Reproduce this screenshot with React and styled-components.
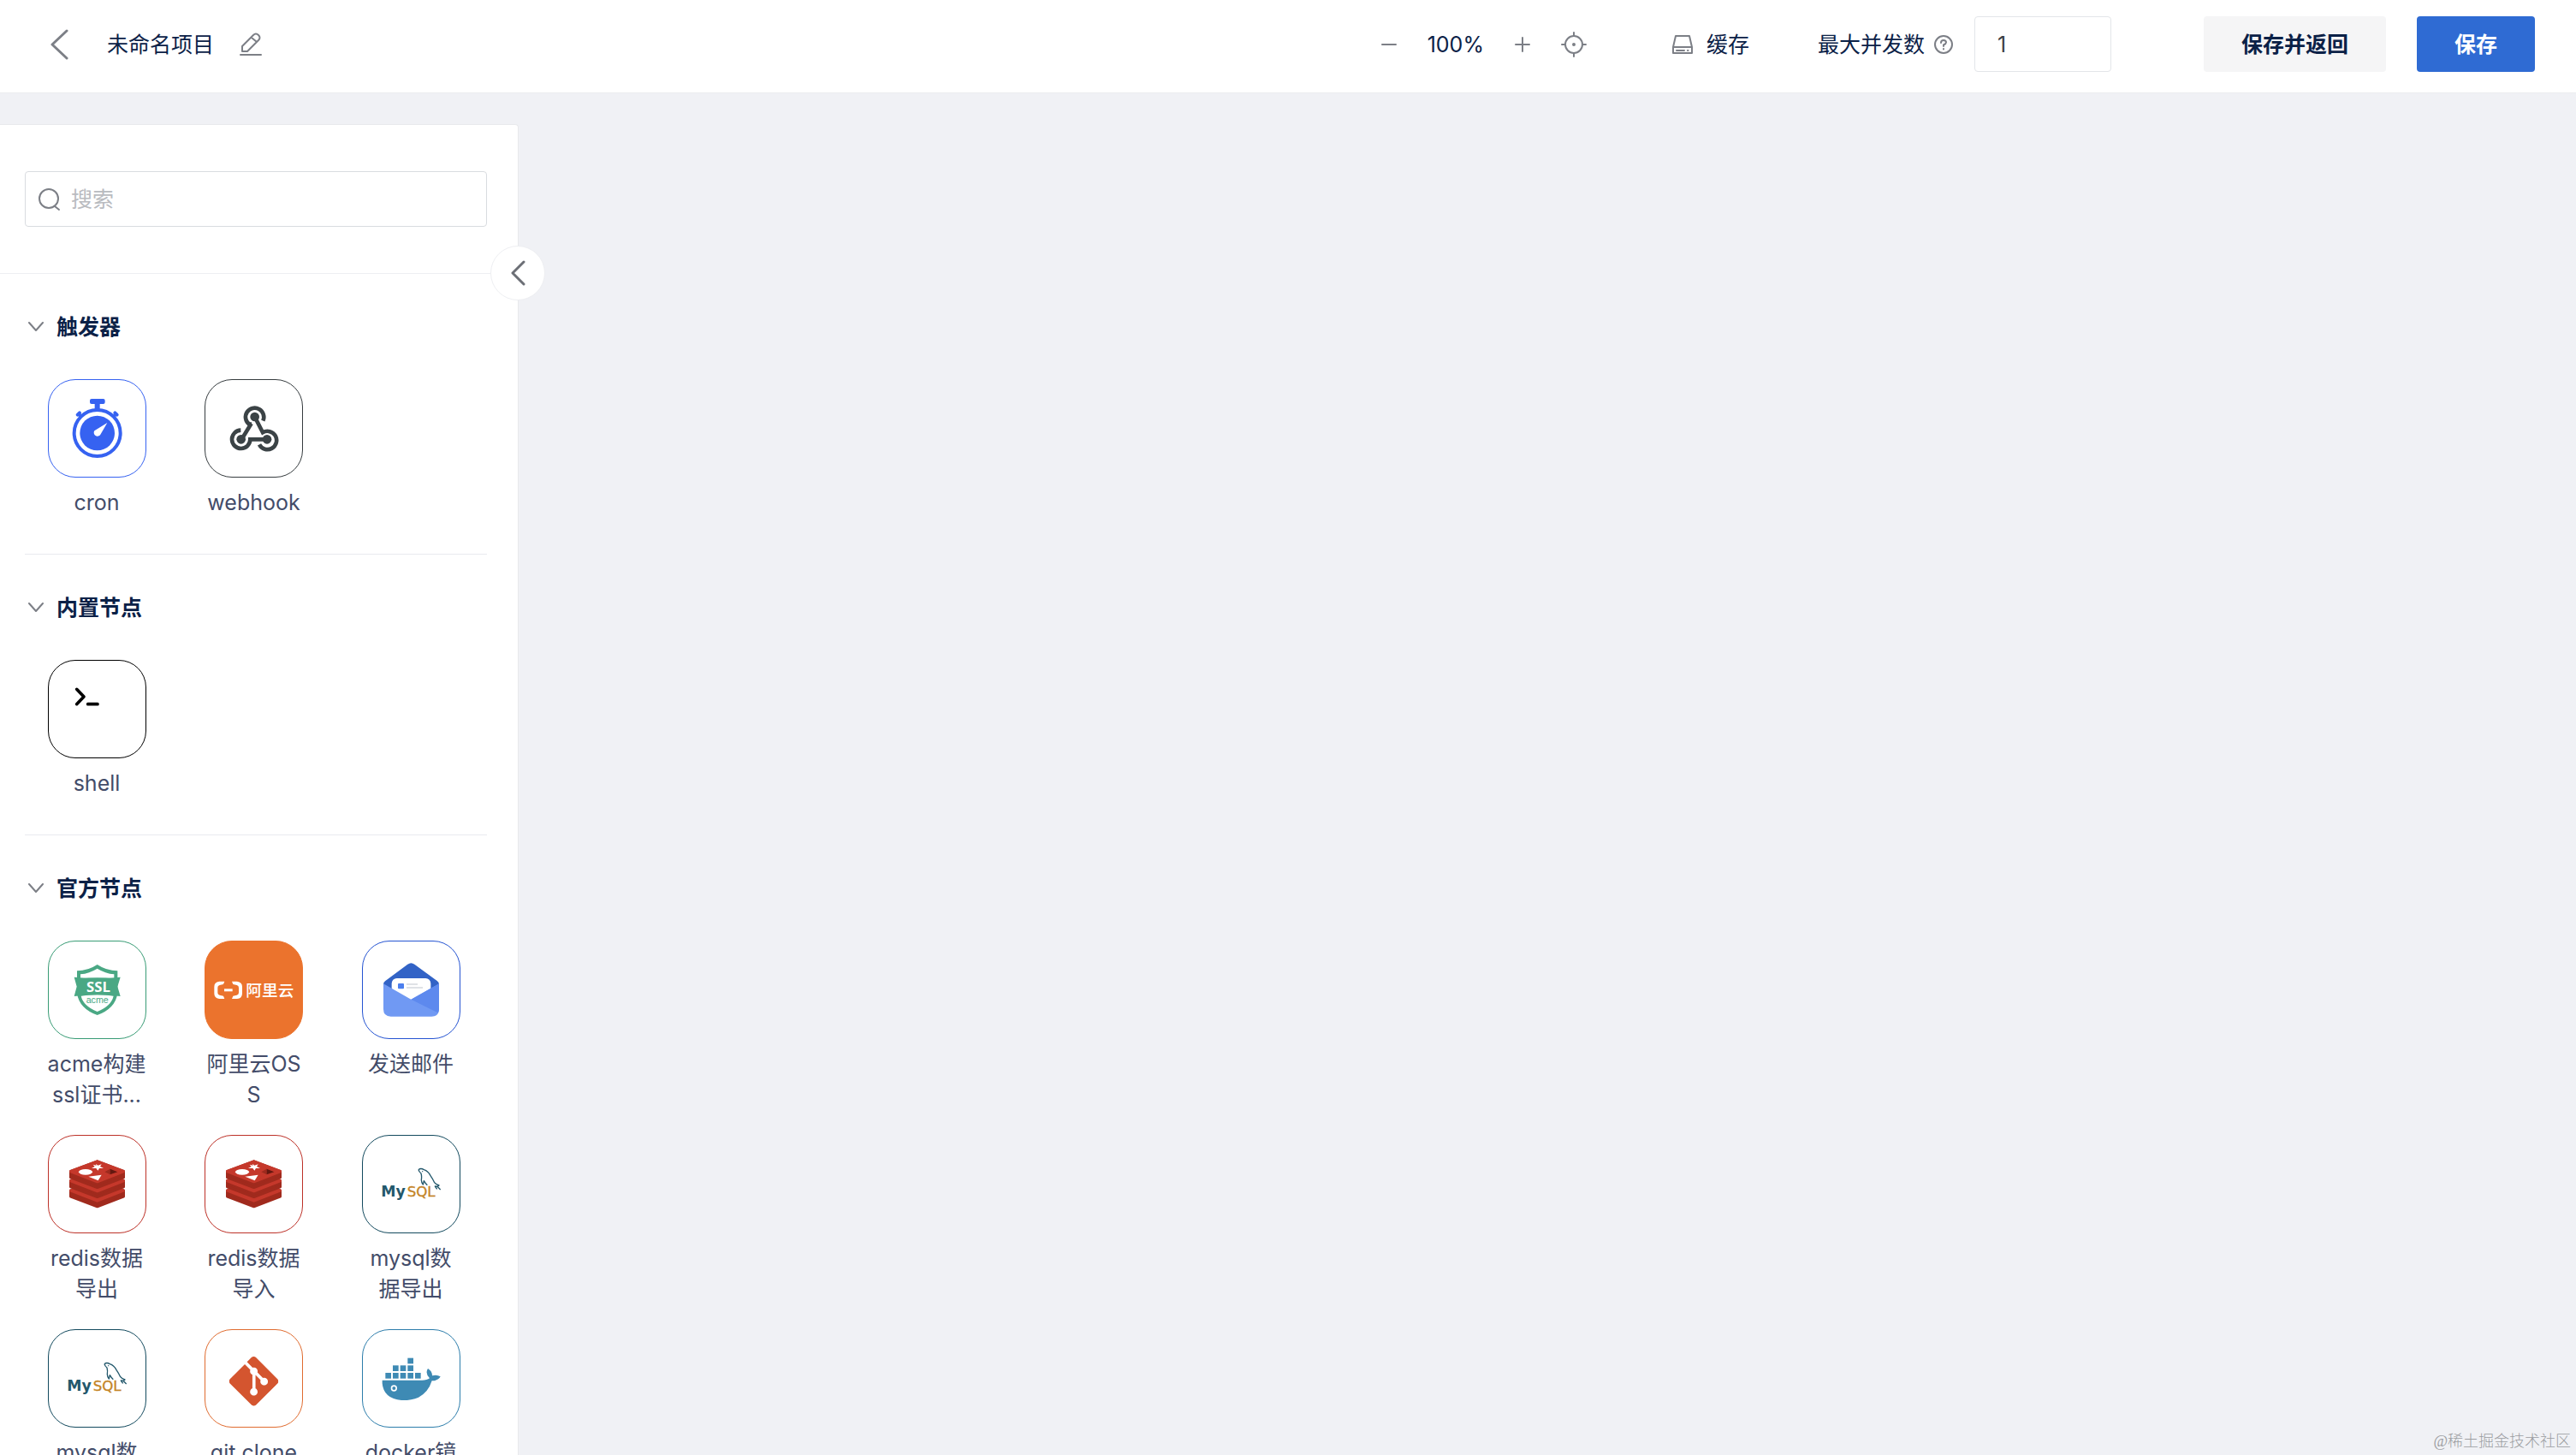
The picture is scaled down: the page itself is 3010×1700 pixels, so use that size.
import React, { useState } from 'react';
import styled, { createGlobalStyle } from 'styled-components';
import { SiGit } from 'react-icons/si';

const GlobalStyle = createGlobalStyle`
  * {
    box-sizing: border-box;
  }
  body {
    margin: 0;
    background: #f0f1f5;
    color: #0b2147;
    font-family: Inter, 'Noto Sans CJK SC', sans-serif;
    font-size: 25px;
    line-height: 36px;
  }
  button,
  input {
    font: inherit;
    color: inherit;
  }
  h1,
  h2,
  p,
  ul {
    margin: 0;
    padding: 0;
  }
`;

const PageBlock = styled.div`
  display: flex;
  flex-direction: column;
  height: 100vh;
  overflow: hidden;
`;

const HeaderBlock = styled.header`
  display: flex;
  justify-content: space-between;
  padding: 19px 48px 24px 57px;
  background: #fff;
  border-bottom: 1px solid #ebecef;
`;

const HeaderGroup = styled.div`
  display: flex;
  align-items: center;
`;

const ProjectTitle = styled.h1`
  margin: 0 30px 0 44px;
  font-size: 25px;
  font-weight: 400;
`;

const IconButton = styled.button`
  display: flex;
  align-items: center;
  justify-content: center;
  padding: 0;
  border: none;
  background: none;
  color: #7c7f86;
  cursor: pointer;
`;

const ZoomBlock = styled.div`
  display: flex;
  align-items: center;
  gap: 36px;
  margin-right: 100px;
`;

const CacheButton = styled.button`
  display: flex;
  align-items: center;
  gap: 16px;
  margin-right: 80px;
  padding: 0;
  border: none;
  background: none;
  cursor: pointer;
  svg {
    color: #7c7f86;
  }
`;

const ConcurrencyBlock = styled.div`
  display: flex;
  align-items: center;
  margin-right: 108px;
  svg {
    margin: 0 24px 0 10px;
    color: #7c7f86;
  }
  input {
    width: 160px;
    height: 65px;
    padding: 0 26px;
    border: 1px solid #e3e5e9;
    border-radius: 4px;
    background: #fff;
    color: #3c3f45;
    outline: none;
  }
`;

const ActionButton = styled.button`
  height: 65px;
  padding: 0 44px;
  border: none;
  border-radius: 4px;
  background: ${(props) => (props.$primary ? '#2f6bd3' : '#f5f5f6')};
  color: ${(props) => (props.$primary ? '#fff' : '#0b2147')};
  font-weight: 700;
  cursor: pointer;
  & + & {
    margin-left: 36px;
  }
`;

const ContentBlock = styled.div`
  display: flex;
  flex: 1;
  min-height: 0;
`;

const SidebarBlock = styled.aside`
  position: relative;
  flex: none;
  width: 606px;
  margin-top: 36px;
  border: 1px solid #e8e9ec;
  border-left: none;
  border-bottom: none;
  border-top-right-radius: 4px;
  background: #fff;
`;

const SidebarScroll = styled.div`
  height: 100%;
  overflow: hidden;
`;

const CollapseButton = styled(IconButton)`
  position: absolute;
  top: 141px;
  right: -32px;
  width: 64px;
  height: 64px;
  border: 1px solid #eeeff2;
  border-radius: 50%;
  background: #fff;
  color: #6c6f76;
`;

const SearchBlock = styled.div`
  padding: 54px 36px 54px 29px;
  border-bottom: 1px solid #eeeff2;
`;

const SearchField = styled.label`
  display: flex;
  align-items: center;
  gap: 11px;
  height: 65px;
  padding: 0 14px;
  border: 1px solid #d9dce0;
  border-radius: 4px;
  color: #7c7f86;
  input {
    flex: 1;
    min-width: 0;
    padding: 0;
    border: none;
    background: none;
    outline: none;
  }
  input::placeholder {
    color: #b9bbbf;
    opacity: 1;
  }
`;

const SectionBlock = styled.section`
  margin: 0 36px 0 29px;
  padding: 44px 0 42px;
  & + & {
    border-top: 1px solid #e9eaef;
  }
`;

const SectionToggle = styled.button`
  display: flex;
  align-items: center;
  gap: 14px;
  padding: 0 0 0 3px;
  border: none;
  background: none;
  cursor: pointer;
  svg {
    color: #7c7f86;
  }
`;

const SectionTitle = styled.h2`
  margin-bottom: 43px;
  font-size: 25px;
  font-weight: 700;
`;

const NodeList = styled.ul`
  display: grid;
  grid-template-columns: repeat(3, 116px);
  justify-content: space-between;
  gap: 29px 0;
  padding: 0 31px 0 26px;
  list-style: none;
`;

const NodeItem = styled.li`
  display: flex;
  flex-direction: column;
  align-items: center;
  gap: 11px;
  cursor: grab;
  p {
    display: -webkit-box;
    width: 116px;
    overflow: hidden;
    color: #434c69;
    text-align: center;
    word-break: break-all;
    -webkit-box-orient: vertical;
    -webkit-line-clamp: 2;
  }
`;

const NodeTile = styled.div`
  width: 115px;
  height: 115px;
  overflow: hidden;
  border: 1px solid ${(props) => props.$color};
  border-radius: 32px;
  background: ${(props) => (props.$filled ? props.$color : '#fff')};
  svg {
    display: block;
  }
`;

const CanvasBlock = styled.main`
  display: flex;
  flex: 1;
  align-items: flex-end;
  justify-content: flex-end;
  padding: 0 6px 2px;
`;

const CommunityMark = styled.span`
  color: #9b9da1;
  font-family: 'Liberation Serif', 'Noto Sans CJK SC', serif;
  font-size: 18px;
  font-weight: 300;
  line-height: 28px;
`;

const LineIcon = ({ width, height, stroke = 2, children }) => (
  <svg
    width={width}
    height={height}
    viewBox={`0 0 ${width} ${height}`}
    fill="none"
    stroke="currentColor"
    strokeWidth={stroke}
    strokeLinecap="round"
    strokeLinejoin="round"
    aria-hidden="true"
  >
    {children}
  </svg>
);

const BackIcon = ({ width = 24, height = 36 }) => (
  <LineIcon width={width} height={height} stroke={3}>
    <path d={`M${width - 3} 2 L4 ${height / 2} L${width - 3} ${height - 2}`} />
  </LineIcon>
);

const EditIcon = () => (
  <LineIcon width={26} height={28}>
    <path d="M3 22 V16 L16 3 Q19 0 22 3 Q25 6 22 9 L9 22 Z M14 6 L20 11 M1 26 H25" />
  </LineIcon>
);

const TargetIcon = () => (
  <LineIcon width={30} height={30}>
    <circle cx="15" cy="15" r="10" />
    <circle cx="15" cy="15" r="1" />
    <path d="M15 1 V5 M15 25 V29 M1 15 H5 M25 15 H29" />
  </LineIcon>
);

const DiskIcon = () => (
  <LineIcon width={24} height={24}>
    <path d="M1 15 L4 2 H20 L23 15 V22 H1 Z M1 15 H23 M5 19 H14 M18 19 H18.5" />
  </LineIcon>
);

const HelpIcon = () => (
  <LineIcon width={24} height={24}>
    <circle cx="12" cy="12" r="10" />
    <path d="M9 10 Q9 7 12 7 Q15 7 15 9.5 Q15 11 12 12.5 V14 M12 17 V17.5" />
  </LineIcon>
);

const SearchIcon = () => (
  <LineIcon width={28} height={28}>
    <circle cx="13" cy="13" r="11" />
    <path d="M20 22 L25 26" />
  </LineIcon>
);

const ArrowDownIcon = () => (
  <LineIcon width={20} height={12}>
    <path d="M2 1 L10 10 L18 1" />
  </LineIcon>
);

const Drawing = ({ children }) => (
  <svg width="113" height="113" viewBox="3 3 339 339" aria-hidden="true">
    {children}
  </svg>
);

const CronDrawing = () => (
  <Drawing>
    <g fill="#3662f1">
      <rect x="147" y="69" width="53" height="18" rx="6" />
      <rect x="164" y="80" width="18" height="28" />
      <circle cx="173" cy="189" r="61" />
    </g>
    <circle
      cx="173"
      cy="189"
      r="81"
      fill="none"
      stroke="#3662f1"
      strokeWidth="12"
    />
    <g stroke="#3662f1" strokeWidth="12">
      <path d="M104 125 L111 118 M242 125 L235 118" strokeLinecap="round" />
      <path d="M107 121 L118 133 M239 121 L228 133" />
    </g>
    <path d="M208 153 L184 194 A12 12 0 1 1 163 181 Z" fill="#fff" />
  </Drawing>
);

const WebhookDrawing = () => (
  <Drawing>
    <g fill="none" stroke="#3b4346" strokeWidth="14">
      <path d="M205 146 A32 32 0 1 0 156 158 L165 158" />
      <path d="M164 155 L130 211" />
      <path d="M176 132 L204 187 A32 32 0 1 1 192 229" />
      <path d="M127 179 A32 32 0 1 0 160 211 H219" />
    </g>
    <g fill="#3b4346">
      <circle cx="176" cy="132" r="16" />
      <circle cx="128" cy="211" r="16" />
      <circle cx="219" cy="211" r="16" />
    </g>
  </Drawing>
);

const ShellDrawing = () => (
  <Drawing>
    <path
      d="M101 103 L126 129 L101 155 M140 155 H174"
      fill="none"
      stroke="#000"
      strokeWidth="11"
      strokeLinecap="round"
      strokeLinejoin="round"
    />
  </Drawing>
);

const SslDrawing = () => (
  <Drawing>
    <path
      d="M173 84 Q140 106 102 106 V185 Q110 238 173 261 Q236 238 244 185 V106 Q206 106 173 84 Z"
      fill="#4aa884"
    />
    <path
      d="M173 98 Q145 115 114 118 V133 Q173 126 232 133 V118 Q201 115 173 98 Z M116 194 Q173 186 230 194 Q222 229 173 249 Q124 229 116 194 Z"
      fill="#fff"
    />
    <path
      d="M92 128 Q173 136 254 128 L244 161 L254 195 Q173 184 92 195 L101 161 Z"
      fill="#4aa884"
    />
    <text
      x="177"
      y="181"
      textAnchor="middle"
      fill="#fff"
      fontFamily="Open Sans, sans-serif"
      fontSize="50"
      fontWeight="700"
    >
      SSL
    </text>
    <text
      x="173"
      y="219"
      textAnchor="middle"
      fill="#4aa884"
      fontFamily="Liberation Sans, sans-serif"
      fontSize="32"
    >
      acme
    </text>
  </Drawing>
);

const AliyunDrawing = () => (
  <Drawing>
    <g fill="#fff">
      <path d="M70 143 H52 Q34 145 34 162 V185 Q34 202 52 204 H70 L66 194 L53 191 Q46 189 46 182 V165 Q46 158 53 156 L66 153 Z" />
      <path d="M96 143 H114 Q132 145 132 162 V185 Q132 202 114 204 H96 L100 194 L113 191 Q120 189 120 182 V165 Q120 158 113 156 L100 153 Z" />
      <rect x="69" y="169" width="29" height="9" />
    </g>
    <text
      x="145"
      y="194"
      fill="#fff"
      fontFamily="Noto Sans CJK SC, sans-serif"
      fontSize="56"
      fontWeight="500"
    >
      阿里云
    </text>
  </Drawing>
);

const MailDrawing = () => (
  <Drawing>
    <path
      d="M75 152 Q75 146 82 141 L160 83 Q172 74 184 83 L263 141 Q270 146 270 152 L240 200 H105 Z"
      fill="#3263c6"
    />
    <rect x="104" y="132" width="137" height="90" rx="18" fill="#fff" />
    <rect x="126" y="150" width="21" height="19" rx="3" fill="#4c7fee" />
    <path d="M156 153 H195 M156 165 H213" stroke="#dfe2e6" strokeWidth="6" />
    <path
      d="M75 151 L172 206 L270 151 V240 Q270 266 244 266 H101 Q75 266 75 240 Z"
      fill="#7099f3"
    />
    <path d="M172 206 L270 151 V240 Q270 248 266 253 Z" fill="#5d89ee" />
  </Drawing>
);

const RedisLayer = ({ y }) => (
  <g strokeLinejoin="round" strokeWidth="10">
    <path
      d={`M80 ${y} L173 ${y - 35} L265 ${y} V${y + 21} L173 ${y + 56} L80 ${y + 21} Z`}
      fill="#a02a1d"
      stroke="#a02a1d"
    />
    <path
      d={`M80 ${y} L173 ${y - 35} L265 ${y} L173 ${y + 36} Z`}
      fill="#c5382b"
      stroke="#c5382b"
    />
  </g>
);

const RedisDrawing = () => (
  <Drawing>
    <RedisLayer y={195} />
    <RedisLayer y={161} />
    <RedisLayer y={128} />
    <g fill="#fff">
      <path d="M168 101 L175 107 L188 103 L183 111 L195 117 L180 117 L175 125 L169 117 L153 117 L164 111 L158 104 L170 107 Z" />
      <ellipse cx="132" cy="130" rx="24" ry="10" />
      <path d="M142 146 L188 140 L176 160 Z" />
    </g>
    <path d="M199 130 L218 119 V139 Z" fill="#9d2a1e" />
    <path d="M218 119 L244 130 L218 139 Z" fill="#641810" />
  </Drawing>
);

const MysqlDrawing = () => (
  <Drawing>
    <g fontFamily="DejaVu Sans, sans-serif">
      <text x="67" y="217" fill="#23586c" fontSize="52" fontWeight="700">
        My
      </text>
      <text x="158" y="217" fill="#c48426" stroke="#c48426" fontSize="50">
        SQL
      </text>
    </g>
    <path
      d="M198 122 Q206 115 217 122 Q232 127 240 143 Q249 156 254 167 Q259 174 270 177 L264 181 L275 192 M198 122 Q200 130 207 135 Q210 145 208 158 Q208 166 214 174 L217 161 Q222 170 229 176 M264 181 L256 180 L263 190"
      fill="none"
      stroke="#23586c"
      strokeWidth="4"
      strokeLinejoin="round"
    />
    <circle cx="212" cy="128" r="2" fill="#23586c" />
  </Drawing>
);

const GitDrawing = () => (
  <Drawing>
    <SiGit x="86" y="96" size={173} color="#d4552f" />
  </Drawing>
);

const containers = [
  [160, 101],
  [108, 127],
  [134, 127],
  [160, 127],
  [82, 153],
  [108, 153],
  [134, 153],
  [160, 153],
  [186, 153],
];

const DockerDrawing = () => (
  <Drawing>
    <g fill="#3e8ab4">
      {containers.map(([x, y]) => (
        <rect key={`${x}-${y}`} x={x} y={y} width="20" height="20" />
      ))}
      <path d="M71 179 H210 Q228 179 237 172 Q220 154 231 138 Q246 147 246 163 Q262 158 275 166 Q267 181 245 181 Q232 222 198 239 Q172 250 138 249 Q76 244 71 190 Z" />
    </g>
    <circle cx="112" cy="207" r="11" fill="#fff" />
    <circle cx="112" cy="207" r="6" fill="#3e8ab4" />
  </Drawing>
);

const sections = [
  {
    title: '触发器',
    nodes: [
      { name: 'cron', color: '#3662f1', Icon: CronDrawing },
      { name: 'webhook', color: '#363c3f', Icon: WebhookDrawing },
    ],
  },
  {
    title: '内置节点',
    nodes: [{ name: 'shell', color: '#000', Icon: ShellDrawing }],
  },
  {
    title: '官方节点',
    nodes: [
      { name: 'acme构建ssl证书...', color: '#389c75', Icon: SslDrawing },
      {
        name: '阿里云OSS',
        color: '#eb732d',
        filled: true,
        Icon: AliyunDrawing,
      },
      { name: '发送邮件', color: '#2554d2', Icon: MailDrawing },
      { name: 'redis数据导出', color: '#bd3128', Icon: RedisDrawing },
      { name: 'redis数据导入', color: '#bd3128', Icon: RedisDrawing },
      { name: 'mysql数据导出', color: '#134a5e', Icon: MysqlDrawing },
      { name: 'mysql数据导入', color: '#134a5e', Icon: MysqlDrawing },
      { name: 'git clone', color: '#e06c30', Icon: GitDrawing },
      { name: 'docker镜像构建', color: '#2c7dab', Icon: DockerDrawing },
    ],
  },
];

const NodeSection = ({ title, nodes }) => {
  const [open, setOpen] = useState(true);

  return (
    <SectionBlock>
      <SectionTitle>
        <SectionToggle aria-expanded={open} onClick={() => setOpen(!open)}>
          <ArrowDownIcon />
          {title}
        </SectionToggle>
      </SectionTitle>
      {open && (
        <NodeList>
          {nodes.map(({ name, color, filled, Icon }) => (
            <NodeItem key={name}>
              <NodeTile $color={color} $filled={filled}>
                <Icon />
              </NodeTile>
              <p>{name}</p>
            </NodeItem>
          ))}
        </NodeList>
      )}
    </SectionBlock>
  );
};

const Header = () => {
  const [limit, setLimit] = useState('1');

  return (
    <HeaderBlock>
      <HeaderGroup>
        <IconButton aria-label="返回">
          <BackIcon />
        </IconButton>
        <ProjectTitle>未命名项目</ProjectTitle>
        <IconButton aria-label="编辑">
          <EditIcon />
        </IconButton>
      </HeaderGroup>
      <HeaderGroup>
        <ZoomBlock>
          <IconButton aria-label="缩小">
            <LineIcon width={18} height={18}>
              <path d="M1 9 H17" />
            </LineIcon>
          </IconButton>
          <span>100%</span>
          <IconButton aria-label="放大">
            <LineIcon width={18} height={18}>
              <path d="M1 9 H17 M9 1 V17" />
            </LineIcon>
          </IconButton>
          <IconButton aria-label="居中">
            <TargetIcon />
          </IconButton>
        </ZoomBlock>
        <CacheButton>
          <DiskIcon />
          缓存
        </CacheButton>
        <ConcurrencyBlock>
          <label htmlFor="concurrency">最大并发数</label>
          <HelpIcon />
          <input
            id="concurrency"
            value={limit}
            onChange={(e) => setLimit(e.target.value)}
          />
        </ConcurrencyBlock>
        <ActionButton>保存并返回</ActionButton>
        <ActionButton $primary>保存</ActionButton>
      </HeaderGroup>
    </HeaderBlock>
  );
};

const App = () => {
  return (
    <>
      <GlobalStyle />
      <PageBlock>
        <Header />
        <ContentBlock>
          <SidebarBlock>
            <SidebarScroll>
              <SearchBlock>
                <SearchField>
                  <SearchIcon />
                  <input placeholder="搜索" aria-label="搜索" />
                </SearchField>
              </SearchBlock>
              {sections.map((section) => (
                <NodeSection key={section.title} {...section} />
              ))}
            </SidebarScroll>
            <CollapseButton aria-label="收起">
              <BackIcon width={20} height={30} />
            </CollapseButton>
          </SidebarBlock>
          <CanvasBlock>
            <CommunityMark>@稀土掘金技术社区</CommunityMark>
          </CanvasBlock>
        </ContentBlock>
      </PageBlock>
    </>
  );
};

export default App;
